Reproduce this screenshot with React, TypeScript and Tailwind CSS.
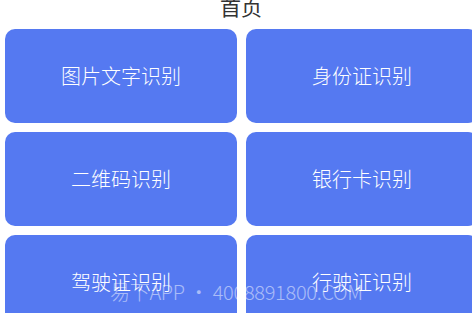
import React from "react";

const items = ["图片文字识别", "身份证识别", "二维码识别", "银行卡识别", "驾驶证识别", "行驶证识别"];

export default function App() {
  return (
    <div
      className="relative w-[472px] h-[313px] overflow-hidden bg-white"
      style={{ fontFamily: '"Noto Sans CJK SC", "Noto Sans", sans-serif' }}
    >
      <div className="h-[29px] flex justify-center">
        <div className="text-[21px] leading-[21px] -mt-[4px] text-[#333333] pl-[10px]">首页</div>
      </div>
      <div className="grid grid-cols-[232px_232px] gap-[9px] pl-[5px] w-[490px]">
        {items.map((t) => (
          <div
            key={t}
            className="h-[94px] rounded-[10px] bg-[#5579f1] flex items-center justify-center text-white text-[20px] font-light"
          >
            {t}
          </div>
        ))}
      </div>
      <div className="absolute left-[110px] top-[277px] text-[20px] font-light text-white/50 whitespace-nowrap tracking-[-0.3px]">
        易下APP • 4008891800.COM
      </div>
    </div>
  );
}
